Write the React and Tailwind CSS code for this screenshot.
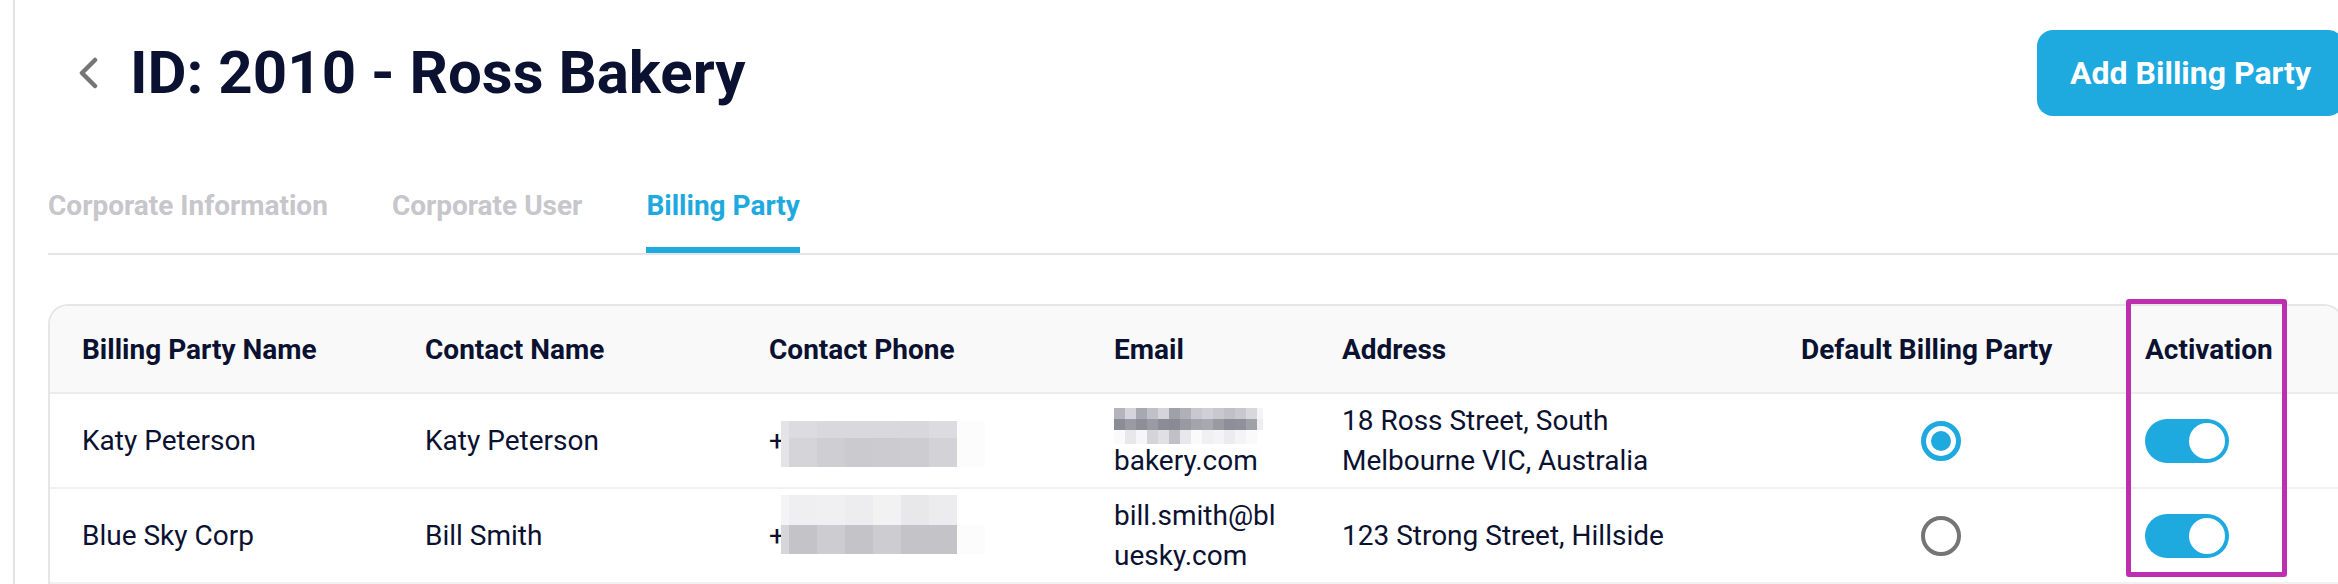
import React from "react";

const tabs = [
  { label: "Corporate Information", active: false },
  { label: "Corporate User", active: false },
  { label: "Billing Party", active: true }
];

const headers = ["Billing Party Name", "Contact Name", "Contact Phone", "Email", "Address", "Default Billing Party", "Activation"];

// pixelated (blurred) phone numbers
const phoneBlurs = [
  {
    shift: "translate-y-[3px]",
    rows: [
      { h: "h-[17px]", cells: ["bg-[#e4e4e7]", "bg-[#dcdce0]", "bg-[#d9d9dd]", "bg-[#d9d9dd]", "bg-[#d9d9dd]", "bg-[#d8d8dc]", "bg-[#dcdce0]", "bg-[#fcfcfc]"] },
      { h: "h-[29px]", cells: ["bg-[#e4e4e7]", "bg-[#d5d5d9]", "bg-[#cfcfd3]", "bg-[#cbcbcf]", "bg-[#cccbcf]", "bg-[#cdcdd1]", "bg-[#d3d3d7]", "bg-[#fcfcfc]"] }
    ]
  },
  {
    shift: "-translate-y-[11px]",
    rows: [
      { h: "h-[30px]", cells: ["bg-[#f4f4f5]", "bg-[#efeff1]", "bg-[#f0f0f2]", "bg-[#ededf0]", "bg-[#f2f2f3]", "bg-[#e8e8eb]", "bg-[#ececee]", "bg-[#ffffff]"] },
      { h: "h-[29px]", cells: ["bg-[#d6d6da]", "bg-[#c4c4c8]", "bg-[#cdcdd1]", "bg-[#c4c4c8]", "bg-[#cdcdd1]", "bg-[#c4c4c8]", "bg-[#c4c4c8]", "bg-[#fcfcfc]"] }
    ]
  }
];

const phoneWidths = ["w-[8px]", "w-[28px]", "w-[28px]", "w-[28px]", "w-[28px]", "w-[28px]", "w-[28px]", "w-[28px]"];

const emailBlur = [
  { h: "h-[11px]", cells: ["bg-[#b4b4bc]", "bg-[#d4d4da]", "bg-[#a8a8b0]", "bg-[#c0c0c6]", "bg-[#d4d4da]", "bg-[#a0a0a8]", "bg-[#b0b0b8]", "bg-[#c8c8ce]", "bg-[#d0d0d6]", "bg-[#c8c8ce]", "bg-[#c0c0c6]", "bg-[#c8c8ce]", "bg-[#d8d8dc]", "bg-[#f4f4f6]"] },
  { h: "h-[11px]", cells: ["bg-[#8c8c96]", "bg-[#9a9aa2]", "bg-[#8e8e98]", "bg-[#9a9aa2]", "bg-[#8c8c96]", "bg-[#8a8a94]", "bg-[#989aa2]", "bg-[#a4a4ac]", "bg-[#a8a8b0]", "bg-[#9a9aa2]", "bg-[#8e8e98]", "bg-[#90909c]", "bg-[#a0a0a8]", "bg-[#eeeef0]"] },
  { h: "h-[14px]", cells: ["bg-[#fafafa]", "bg-[#e8e8ec]", "bg-[#f6f6f8]", "bg-[#d4d4da]", "bg-[#e0e0e4]", "bg-[#c0c0c6]", "bg-[#e8e8ec]", "bg-[#fafafa]", "bg-[#f0f0f2]", "bg-[#f4f4f6]", "bg-[#ececf0]", "bg-[#f4f4f6]", "bg-[#fafafa]", "bg-[#ffffff]"] }
];

const rows = [
  {
    name: "Katy Peterson",
    contact: "Katy Peterson",
    phone: phoneBlurs[0],
    email: null,
    address: "18 Ross Street, South Melbourne VIC, Australia",
    isDefault: true,
    active: true
  },
  {
    name: "Blue Sky Corp",
    contact: "Bill Smith",
    phone: phoneBlurs[1],
    email: "bill.smith@bluesky.com",
    address: "123 Strong Street, Hillside",
    isDefault: false,
    active: true
  }
];

const PhoneMosaic = ({ blur }) => (
  <div className={`flex flex-col ${blur.shift}`}>
    {blur.rows.map((r, i) => (
      <div key={i} className={`flex ${r.h}`}>
        {r.cells.map((c, j) => (
          <div key={j} className={`${phoneWidths[j]} ${c}`}></div>
        ))}
      </div>
    ))}
  </div>
);

const EmailMosaic = () => (
  <div className="flex flex-col mt-[7px]">
    {emailBlur.map((r, i) => (
      <div key={i} className={`flex ${r.h}`}>
        {r.cells.map((c, j) => (
          <div key={j} className={`${j === 13 ? "w-[6px]" : "w-[11px]"} ${c}`}></div>
        ))}
      </div>
    ))}
  </div>
);

const Radio = ({ checked }) =>
  checked ? (
    <div className="w-[40px] h-[40px] rounded-full border-[5px] border-[#1ea9df] flex items-center justify-center">
      <div className="w-[20px] h-[20px] rounded-full bg-[#1ea9df]"></div>
    </div>
  ) : (
    <div className="w-[40px] h-[40px] rounded-full border-[4px] border-[#757575]"></div>
  );

const Toggle = ({ on }) => (
  <div className={`w-[84px] h-[44px] rounded-full p-[4px] flex ${on ? "bg-[#1ea9df] justify-end" : "bg-[#d1d5db] justify-start"}`}>
    <div className="w-[36px] h-[36px] rounded-full bg-white"></div>
  </div>
);

const App = () => {
  return (
    <div className="w-[2338px] h-[584px] overflow-hidden bg-white font-['Roboto','Liberation_Sans',sans-serif] text-[#0b1130]">
      <div className="ml-[13px] w-[2331px] h-full border-l-2 border-[#e2e2e2] pl-[33px]">
        {/* Title + action */}
        <div className="pt-[30px] flex items-center justify-between">
          <div className="flex items-center pl-[30px] gap-[32px]">
            <svg width="20" height="32" viewBox="0 0 20 32" fill="none">
              <path d="M17 3 L4 16 L17 29" stroke="#757575" strokeWidth="4.5" strokeLinecap="round" strokeLinejoin="round" />
            </svg>
            <h1 className="text-[60px] leading-[70px] font-bold">ID: 2010 - Ross Bakery</h1>
          </div>
          <button className="h-[86px] px-[33px] rounded-2xl bg-[#1ea9df] text-white text-[32px] font-bold leading-none">
            Add Billing Party
          </button>
        </div>

        {/* Tabs */}
        <div className="mt-[73px] flex gap-16 border-b-2 border-[#e5e5e5]">
          {tabs.map((tab) => (
            <div
              key={tab.label}
              className={`text-[28px] leading-[33px] font-bold pb-[25px] border-b-[6px] ${tab.active ? "text-[#1ea9df] border-[#1ea9df]" : "text-[#c6c6cb] border-transparent"}`}
            >
              {tab.label}
            </div>
          ))}
        </div>

        {/* Table */}
        <div className="relative mt-[49px]">
          <div className="border-2 border-b-0 border-[#e6e6e6] rounded-t-[20px] overflow-hidden">
            <div className="grid grid-cols-[343px_344px_345px_228px_459px_344px_1fr] h-[88px] bg-[#f9f9f9] border-b-2 border-[#ececec]">
              {headers.map((h) => (
                <div key={h} className="pl-8 flex items-center text-[28px] leading-[33px] font-bold">
                  {h}
                </div>
              ))}
            </div>

            {rows.map((row, index) => (
              <div
                key={index}
                className="grid grid-cols-[343px_344px_345px_228px_459px_344px_1fr] h-[95px] border-b-2 border-[#f1f1f1] text-[28px] leading-[40px]"
              >
                <div className="pl-8 flex items-center">{row.name}</div>
                <div className="pl-8 flex items-center">{row.contact}</div>
                <div className="pl-8 flex items-center">
                  <span className="w-[12px]">+</span>
                  <PhoneMosaic blur={row.phone} />
                </div>
                <div className="pl-8 flex items-center">
                  {row.email ? (
                    <span className="w-[168px] break-all">{row.email}</span>
                  ) : (
                    <div className="flex flex-col">
                      <div className="h-[40px]">
                        <EmailMosaic />
                      </div>
                      <span>bakery.com</span>
                    </div>
                  )}
                </div>
                <div className="pl-8 flex items-center">
                  <span className="max-w-[360px]">{row.address}</span>
                </div>
                <div className="flex items-center justify-center">
                  <Radio checked={row.isDefault} />
                </div>
                <div className="pl-8 flex items-center">
                  <Toggle on={row.active} />
                </div>
              </div>
            ))}
            <div className="h-[40px]"></div>
          </div>

          {/* highlight around the Activation column */}
          <div className="absolute top-[-5px] left-[2078px] w-[161px] h-[278px] border-[5px] border-[#bc2fae] rounded-[3px] pointer-events-none"></div>
        </div>
      </div>
    </div>
  );
};

export default App;
